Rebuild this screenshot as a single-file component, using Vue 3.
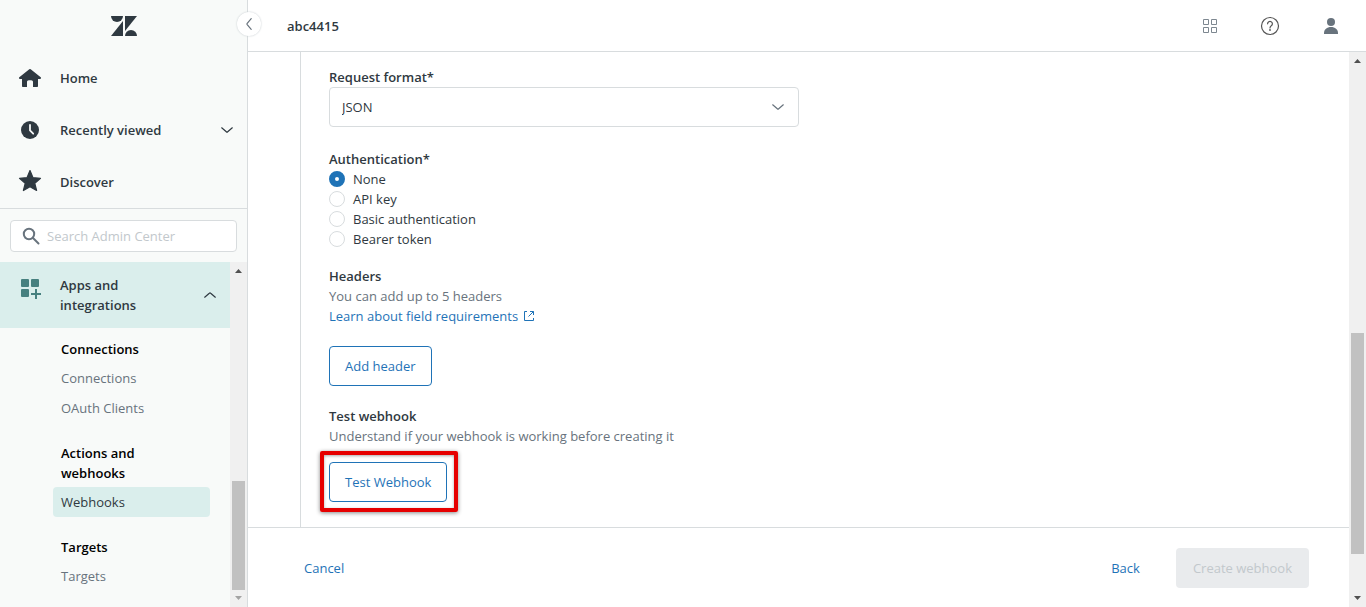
<script setup>
import { ref } from 'vue'

const format = ref('JSON')
const auth = ref('None')
const query = ref('')
const authOptions = ['None', 'API key', 'Basic authentication', 'Bearer token']
const groups = [
  { title: 'Connections', items: ['Connections', 'OAuth Clients'] },
  { title: 'Actions and webhooks', items: ['Webhooks'] },
  { title: 'Targets', items: ['Targets'] },
]
const active = 'Webhooks'
</script>

<template>
  <div class="shell">
    <aside class="sidebar">
      <div class="brand">
        <svg width="26" height="20" viewBox="0 0 26 20" role="img" aria-label="Zendesk">
          <g fill="#2f3941">
            <path d="M0 0h12a6 6 0 0 1-12 0z" />
            <path d="M12 5v15H0z" />
            <path d="M14 0h12L14 15z" />
            <path d="M14 20a6 6 0 0 1 12 0z" />
          </g>
        </svg>
      </div>
      <nav class="primary">
        <a href="#" class="nav-row">
          <svg width="24" height="24" viewBox="0 0 24 24" fill="#2f3941">
            <path d="M11.3 3.3a1 1 0 0 1 1.4 0l10 8c.7.6.3 1.7-.6 1.7H20v7.2c0 .5-.3.8-.8.8H15v-5c0-1-.7-1.8-1.8-1.8h-2.4C9.7 14.2 9 15 9 16v5H4.8c-.5 0-.8-.3-.8-.8V13H1.9c-.9 0-1.3-1.1-.6-1.7z" />
          </svg>
          <span>Home</span>
        </a>
        <a href="#" class="nav-row">
          <svg width="24" height="24" viewBox="0 0 24 24">
            <circle cx="12" cy="12" r="9" fill="#2f3941" />
            <path d="M12 7v5.5l3.2 3.2" fill="none" stroke="#f8f9f9" stroke-width="1.8" stroke-linecap="round" />
          </svg>
          <span>Recently viewed</span>
          <svg class="chevron" width="12" height="6" viewBox="0 0 12 6">
            <path d="M.7.8l4.6 3.9a1 1 0 0 0 1.4 0L11.3.8" fill="none" stroke="#2f3941" stroke-width="1.2" stroke-linecap="round" />
          </svg>
        </a>
        <a href="#" class="nav-row">
          <svg width="24" height="24" viewBox="0 0 24 24">
            <path d="M12 .5l3 7.2 7.500.6-5.700 5 1.800 7.200L12 16.700l-6.600 3.800 1.800-7.200-5.700-5L9 7.700z" fill="#2f3941" stroke="#2f3941" stroke-width="1.2" stroke-linejoin="round" />
          </svg>
          <span>Discover</span>
        </a>
      </nav>
      <div class="search-wrap">
        <label class="search">
          <svg width="18" height="18" viewBox="0 0 18 18" fill="none" stroke="#68737d" stroke-width="2">
            <circle cx="7" cy="7" r="5.2" />
            <path d="M11 11l5.500 5.500" stroke-linecap="round" />
          </svg>
          <input v-model="query" type="text" placeholder="Search Admin Center" aria-label="Search Admin Center">
        </label>
      </div>
      <div class="side-scroll">
        <div class="side-list">
          <button type="button" class="section-head">
            <svg width="24" height="24" viewBox="0 0 24 24" fill="#46807f">
              <rect x="3" y="4" width="8" height="8" rx="1" />
              <rect x="13" y="4" width="8" height="8" rx="1" />
              <rect x="3" y="14" width="8" height="8" rx="1" />
              <path d="M17 14h2v4h4v2h-4v4h-2v-4h-4v-2h4z" />
            </svg>
            <span class="section-name">Apps and integrations</span>
            <svg class="chevron" width="12" height="6" viewBox="0 0 12 6">
              <path d="M.7 5.2l4.6-3.9a1 1 0 0 1 1.4 0l4.6 3.9" fill="none" stroke="#2f3941" stroke-width="1.2" stroke-linecap="round" />
            </svg>
          </button>
          <div class="groups">
            <section v-for="g in groups" :key="g.title" class="group">
              <h3>{{ g.title }}</h3>
              <a v-for="i in g.items" :key="i" href="#" class="sub" :class="{ active: i === active }">{{ i }}</a>
            </section>
          </div>
        </div>
        <div class="bar">
          <svg width="7" height="4" viewBox="0 0 7 4"><path d="M0 4L3.500 0 7 4z" fill="#505050" /></svg>
          <div class="track side-track"><div class="thumb side-thumb"></div></div>
          <svg width="7" height="4" viewBox="0 0 7 4"><path d="M0 0l3.500 4L7 0z" fill="#a3a3a3" /></svg>
        </div>
      </div>
      <button type="button" class="collapse" aria-label="Collapse sidebar">
        <svg width="6" height="12" viewBox="0 0 6 12">
          <path d="M5.200.7L1.200 5.400a1 1 0 0 0 0 1.200l4 4.700" fill="none" stroke="#68737d" stroke-width="1.2" stroke-linecap="round" />
        </svg>
      </button>
    </aside>

    <div class="main">
      <header class="topbar">
        <h1>abc4415</h1>
        <button type="button" class="icon-btn" aria-label="Products">
          <svg width="16" height="16" viewBox="0 0 16 16" fill="none" stroke="#7d8790">
            <path d="M1.500 1.500h5v5h-5zM9.500 1.500h5v5h-5zM1.500 9.500h5v5h-5zM9.500 9.500h5v5h-5z" />
          </svg>
        </button>
        <button type="button" class="icon-btn" aria-label="Help">
          <svg width="20" height="20" viewBox="0 0 20 20" fill="none" stroke="#555" stroke-width="1.2">
            <circle cx="10" cy="10" r="8.5" />
            <path d="M7.600 7.800a2.400 2.400 0 1 1 3.700 2c-.8.500-1.300 1-1.300 2.200" stroke-linecap="round" />
            <circle cx="10" cy="14" r=".9" fill="#555" stroke="none" />
          </svg>
        </button>
        <button type="button" class="icon-btn" aria-label="Account">
          <svg width="16" height="16" viewBox="-1 0 16 16" fill="#68737d">
            <circle cx="8" cy="4" r="4" />
            <path d="M1 16v-1c0-3.500 3-6 7-6s7 2.500 7 6v1z" />
          </svg>
        </button>
      </header>

      <div class="body">
        <div class="page">
          <form class="content" @submit.prevent>
            <div class="field">
              <label class="title tight" for="format">Request format*</label>
              <div class="select">
                <select id="format" v-model="format">
                  <option>JSON</option>
                  <option>XML</option>
                  <option>Form encoded</option>
                </select>
                <svg width="12" height="6" viewBox="0 0 12 6">
                  <path d="M.7.8l4.6 3.9a1 1 0 0 0 1.4 0L11.3.8" fill="none" stroke="#68737d" stroke-width="1.2" stroke-linecap="round" />
                </svg>
              </div>
            </div>
            <fieldset class="field auth">
              <legend class="title">Authentication*</legend>
              <label v-for="o in authOptions" :key="o" class="radio">
                <input v-model="auth" type="radio" name="auth" :value="o">
                <span>{{ o }}</span>
              </label>
            </fieldset>
            <section class="field headers">
              <h2 class="title tight">Headers</h2>
              <p>You can add up to 5 headers</p>
              <a href="#" class="learn">Learn about field requirements
                <svg width="12" height="12" viewBox="0 0 12 12" fill="none" stroke="#1f73b7">
                  <path d="M4 1.500H1.500v9h9V8M7 1.500h3.500V5M10.500 1.500L5.500 6.500" />
                </svg>
              </a>
              <button type="button" class="btn outline">Add header</button>
            </section>
            <section class="field test">
              <h2 class="title">Test webhook</h2>
              <p>Understand if your webhook is working before creating it</p>
              <span class="marked">
                <button type="button" class="btn outline">Test Webhook</button>
              </span>
            </section>
          </form>
          <footer class="actions">
            <button type="button" class="btn">Cancel</button>
            <button type="button" class="btn back">Back</button>
            <button type="button" class="btn primary-btn" disabled>Create webhook</button>
          </footer>
        </div>
        <div class="bar">
          <svg width="7" height="4" viewBox="0 0 7 4"><path d="M0 4L3.500 0 7 4z" fill="#505050" /></svg>
          <div class="track main-track"><div class="thumb main-thumb"></div></div>
          <svg width="7" height="4" viewBox="0 0 7 4"><path d="M0 0l3.500 4L7 0z" fill="#505050" /></svg>
        </div>
      </div>
    </div>
  </div>
</template>

<style>
body {
  margin: 0;
}
</style>

<style scoped>
* {
  box-sizing: border-box;
}
.shell {
  display: flex;
  height: 100vh;
  overflow: hidden;
  background: #fff;
  color: #2f3941;
  font: 13px/20px "Open Sans", "Noto Sans", sans-serif;
}
svg {
  display: block;
  flex: none;
}
button,
input,
select {
  font: inherit;
  color: inherit;
}
button {
  cursor: pointer;
}
a {
  color: inherit;
  text-decoration: none;
}
h1, h2, h3, p {
  margin: 0;
  font-size: inherit;
}

.sidebar {
  position: relative;
  display: flex;
  flex-direction: column;
  flex: none;
  width: 248px;
  background: #f8faf9;
  border-right: 1px solid #d8dcde;
}
.brand {
  display: flex;
  align-items: center;
  justify-content: center;
  height: 52px;
}
.primary {
  border-bottom: 1px solid #d8dcde;
}
.nav-row {
  display: flex;
  align-items: center;
  gap: 18px;
  height: 52px;
  padding: 0 14px 0 18px;
  font-weight: 600;
}
.chevron {
  margin-left: auto;
}
.search-wrap {
  padding: 11px 10px 10px;
}
.search {
  display: flex;
  align-items: center;
  gap: 7px;
  height: 32px;
  padding: 0 11px;
  background: #fff;
  border: 1px solid #d8dcde;
  border-radius: 4px;
}
.search input {
  flex: 1;
  min-width: 0;
  padding: 0;
  border: 0;
  outline: 0;
  background: none;
}
.search input::placeholder {
  color: #c2c8cc;
  opacity: 1;
}
.side-scroll {
  display: flex;
  flex: 1;
  min-height: 0;
}
.side-list {
  flex: 1;
  min-width: 0;
  overflow: hidden;
}
.section-head {
  display: flex;
  align-items: flex-start;
  gap: 18px;
  width: 100%;
  padding: 13px 14px 13px 18px;
  border: 0;
  background: #daeeec;
  font-weight: 600;
  text-align: left;
}
.section-name {
  max-width: 100px;
}
.section-head .chevron {
  align-self: center;
}
.groups {
  display: flex;
  flex-direction: column;
  gap: 20px;
  padding: 11px 20px 16px 53px;
}
.group h3 {
  max-width: 120px;
  margin-bottom: 4px;
  padding-left: 8px;
  color: #000;
  font-weight: 600;
}
.sub {
  display: block;
  padding: 5px 8px;
  border-radius: 4px;
  color: #68737d;
}
.sub.active {
  background: #daeeec;
  color: #2f3941;
}
.collapse {
  position: absolute;
  top: 12px;
  right: -14px;
  display: flex;
  align-items: center;
  justify-content: center;
  width: 24px;
  height: 24px;
  padding: 0;
  border: 0;
  border-radius: 50%;
  background: #fff;
  box-shadow: 0 0 2px #c2c8cc;
}

.bar {
  display: flex;
  flex: none;
  flex-direction: column;
  align-items: center;
  width: 17px;
  padding: 7px 2px;
  background: #f0f0f0;
}
.track {
  display: flex;
  flex: 1;
  flex-direction: column;
  align-self: stretch;
  justify-content: flex-end;
  min-height: 0;
}
.thumb {
  background: #c1c1c1;
}
.side-track {
  padding: 6px 0;
}
.side-thumb {
  height: 35%;
}
.main-track {
  padding-bottom: 42px;
}
.main-thumb {
  height: 45%;
}

.main {
  display: flex;
  flex: 1;
  flex-direction: column;
  min-width: 0;
}
.topbar {
  display: flex;
  align-items: center;
  flex: none;
  height: 52px;
  padding: 0 6px 0 39px;
  border-bottom: 1px solid #d8dcde;
}
.topbar h1 {
  margin-right: auto;
  font-weight: 600;
}
.icon-btn {
  display: flex;
  align-items: center;
  justify-content: center;
  width: 60px;
  height: 40px;
  padding: 0;
  border: 0;
  background: none;
}
.body {
  display: flex;
  flex: 1;
  min-height: 0;
}
.page {
  display: flex;
  flex: 1;
  flex-direction: column;
  min-width: 0;
}
.content {
  display: flex;
  flex: 1;
  flex-direction: column;
  align-items: flex-start;
  min-height: 0;
  margin-left: 52px;
  padding: 16px 28px 0;
  border-left: 1px solid #d8dcde;
}
.field {
  display: flex;
  flex-direction: column;
  align-items: flex-start;
  width: 100%;
}
.title {
  padding: 0;
  font-weight: 600;
}
.tight {
  line-height: 19px;
}
.select {
  display: flex;
  align-items: center;
  width: 100%;
  max-width: 470px;
}
.select select {
  flex: 1;
  height: 40px;
  margin-right: -27px;
  padding: 0 36px 0 12px;
  appearance: none;
  border: 1px solid #d8dcde;
  border-radius: 4px;
  background: #fff;
}
.select svg {
  position: relative;
  margin-right: 15px;
  pointer-events: none;
}
.auth {
  margin: 22px 0 0;
  padding: 0;
  border: 0;
}
.radio {
  display: flex;
  align-items: center;
  gap: 8px;
}
.radio input {
  width: 16px;
  height: 16px;
  margin: 0;
  appearance: none;
  border: 1px solid #d8dcde;
  border-radius: 50%;
  background: #fff;
}
.radio input:checked {
  border: 6px solid #1f73b7;
}
.headers {
  margin-top: 18px;
}
.field p {
  color: #68737d;
}
.learn {
  display: flex;
  align-items: center;
  gap: 5px;
  margin-bottom: 20px;
  color: #1f73b7;
}
.test {
  margin-top: 20px;
}
.btn {
  height: 40px;
  padding: 0 15px;
  border: 1px solid transparent;
  border-radius: 4px;
  background: none;
  color: #1f73b7;
}
.outline {
  border-color: #1f73b7;
}
.marked {
  margin: 5px 0 0 -9px;
  padding: 7px 7px 6px 5px;
  border: 4px solid #e60000;
  border-radius: 2px;
  box-shadow: 0 1px 4px #888, inset 0 1px 3px #aaa;
}
.marked .btn {
  display: block;
}
.actions {
  display: flex;
  align-items: center;
  flex: none;
  padding: 20px 40px 19px;
  border-top: 1px solid #d8dcde;
}
.back {
  margin: 0 20px 0 auto;
}
.primary-btn {
  padding: 0 16px;
  background: #e9ebed;
  color: #c2c8cc;
}
</style>
